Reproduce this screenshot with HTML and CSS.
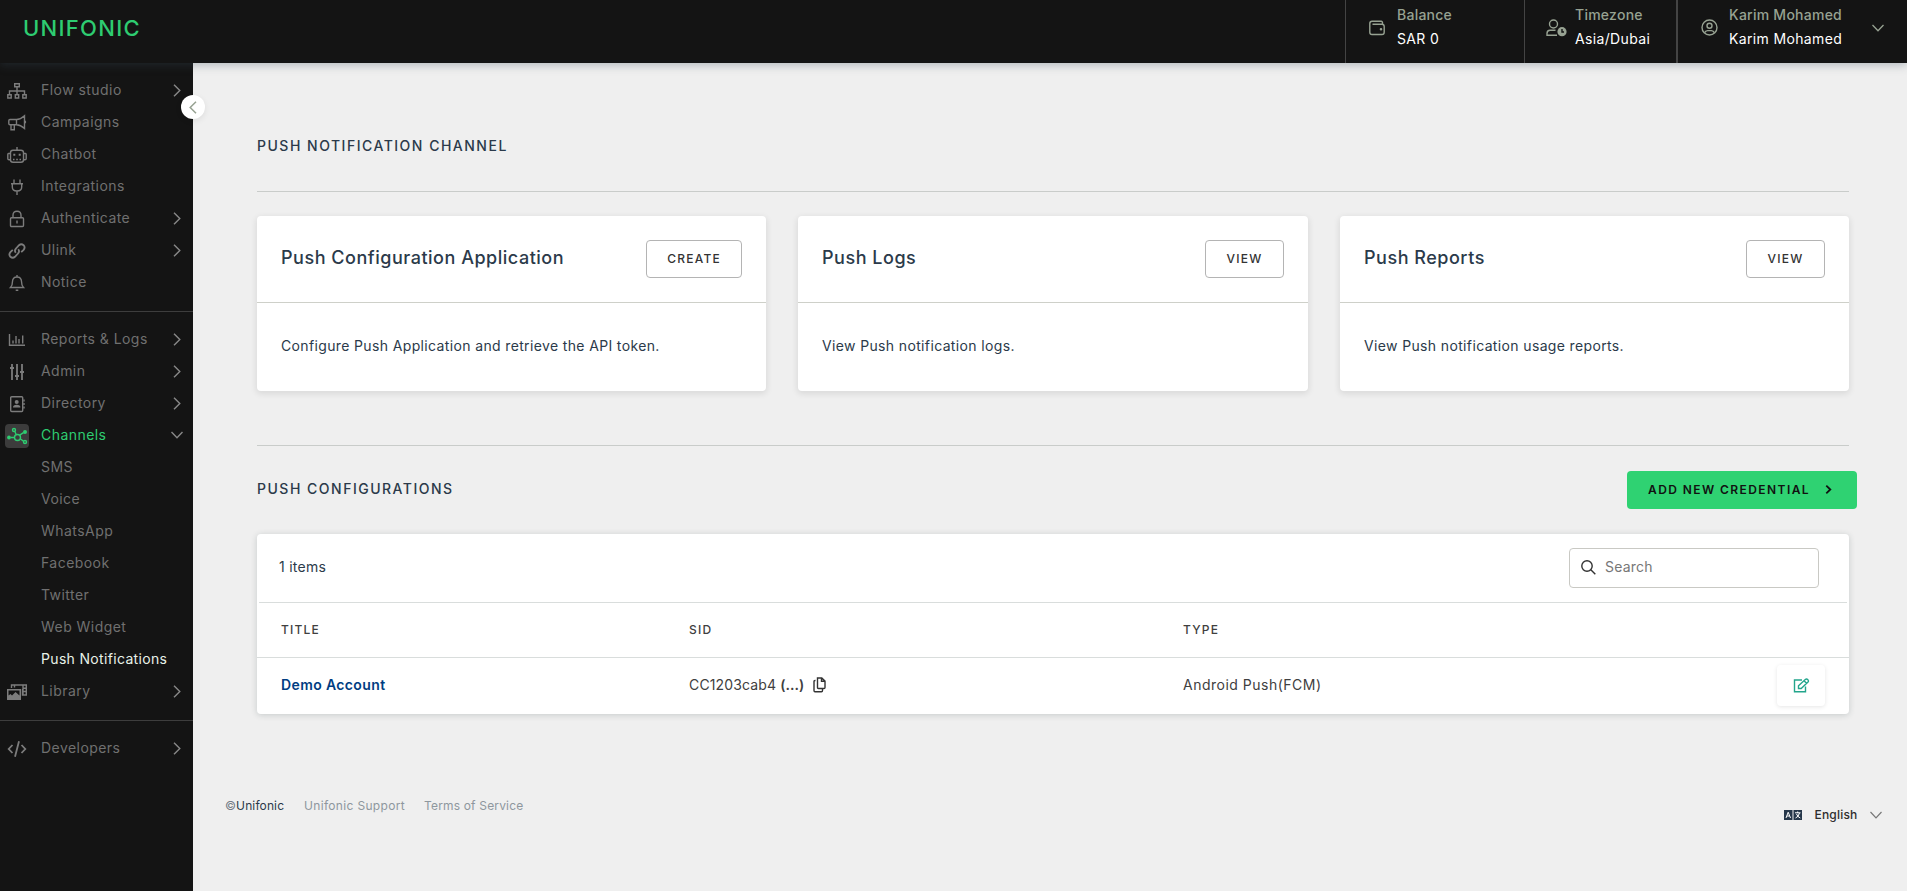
FILE: index.html
```html
<!DOCTYPE html>
<html lang="en">
<head>
<meta charset="utf-8">
<title>Push Notifications</title>
<link rel="stylesheet" href="styles.css">
</head>
<body>
<svg class="defs" width="0" height="0">
  <symbol id="right" viewBox="0 0 8 13"><path d="M1 .7 6.8 6.5 1 12.3"/></symbol>
  <symbol id="down" viewBox="0 0 12 8"><path d="M.5 1 6 6.8 11.5 1"/></symbol>
</svg>
<header class="topbar">
  <div class="logo">UNIFONIC</div>
  <div class="cell balance">
    <svg class="ic" width="16" height="16" viewBox="0 0 16 16"><path d="M13.5 4V2.6Q13.500 1.300 12.200 1.300H3Q.8 1.300.8 3.500V12.200Q.8 14.500 3 14.500H13Q15.200 14.500 15.200 12.200V6.500Q15.200 4.300 13 4.300H3.500"/><circle cx="12" cy="9.300" r=".6"/></svg>
    <div class="pair"><span>Balance</span><b>SAR 0</b></div>
  </div>
  <div class="cell zone">
    <svg class="ic" width="21" height="18" viewBox="0 0 21 18"><circle cx="7.500" cy="5" r="4"/><path d="M11 16.300H1V14.500Q1 11.300 4 11.300H9.500"/><circle class="fl" cx="16" cy="12.700" r="4.600"/><path class="cut" d="M16 10V13H18"/></svg>
    <div class="pair"><span>Timezone</span><b>Asia/Dubai</b></div>
  </div>
  <div class="cell user">
    <svg class="ic" width="17" height="17" viewBox="0 0 17 17"><circle cx="8.500" cy="8.500" r="7.500"/><circle cx="8.500" cy="6.800" r="2.500"/><path d="M3.600 13.800Q4.500 11.600 6.500 11.600H10.500Q12.500 11.600 13.400 13.800"/></svg>
    <div class="pair"><span>Karim Mohamed</span><b>Karim Mohamed</b></div>
    <svg class="ic chev" width="12" height="8"><use href="#down"/></svg>
  </div>
</header>
<div class="body">
<nav class="side">
  <button class="collapse"><svg width="8" height="13" viewBox="0 0 8 13"><path d="M7 .7 1.200 6.500 7 12.300"/></svg></button>
  <a class="item"><svg class="ic" width="20" height="18" viewBox="0 0 20 18"><path d="M7.700 1.700H12.300V4.700H7.700ZM10 5V12.500M2.500 12V9H17.500V12M.8 12.700H4.200V16H.8ZM8.300 12.700H11.700V16H8.300ZM15.800 12.700H19.200V16H15.800Z"/></svg><span>Flow studio</span><svg class="arr" width="8" height="13"><use href="#right"/></svg></a>
  <a class="item"><svg class="ic" width="20" height="18" viewBox="0 0 20 18"><path d="M9.500 5.500H3Q1.800 5.500 1.800 6.700V9.500Q1.800 10.800 3 10.800H9.500M9.500 5.500Q13.500 5.500 17.500 1.800V14.500Q13.500 10.800 9.500 10.800ZM17.500 6.500Q19.500 8 17.500 9.500M4 11V15.700H7.300V11"/></svg><span>Campaigns</span></a>
  <a class="item"><svg class="ic" width="20" height="18" viewBox="0 0 20 18"><rect x="3.500" y="4.300" width="13" height="12" rx="2.500"/><path d="M10 1V4M3 7.500H1.500Q.8 7.500.8 8.500V12.500Q.8 13.800 2 13.800H3M17 7.500H18.500Q19.200 7.500 19.200 8.500V12.500Q19.200 13.800 18 13.800H17M6 13.500H7.500M9.200 13.500H10.800M12.500 13.500H14"/><path class="fl" d="M6.300 7.700H8.300V9.700H6.300ZM11.700 7.700H13.700V9.700H11.700Z"/></svg><span>Chatbot</span></a>
  <a class="item"><svg class="ic" width="20" height="18" viewBox="0 0 20 18"><path d="M7 1.500V5M13 1.500V5M4 5.800H16M5.300 6V9Q5.300 13 10 13Q14.700 13 14.700 9V6M10 13V17"/></svg><span>Integrations</span></a>
  <a class="item"><svg class="ic" width="20" height="18" viewBox="0 0 20 18"><rect x="3.500" y="7.700" width="13" height="8.800" rx="1"/><path d="M6 7.500V5.200Q6 1.200 10 1.200Q14 1.200 14 5.200V7.500M10 10.500V13.500"/></svg><span>Authenticate</span><svg class="arr" width="8" height="13"><use href="#right"/></svg></a>
  <a class="item"><svg class="ic thick" width="20" height="18" viewBox="0 0 20 18"><path d="M8.800 10.800Q7 8.500 9 6.500L12 3.200Q14.300 1.200 16.600 3.200Q18.600 5.400 16.600 7.800L14.200 10.200M11.200 7.300Q13 9.500 11 11.500L8 14.800Q5.700 16.800 3.400 14.800Q1.400 12.600 3.400 10.200L5.800 7.800"/></svg><span>Ulink</span><svg class="arr" width="8" height="13"><use href="#right"/></svg></a>
  <a class="item"><svg class="ic" width="20" height="18" viewBox="0 0 20 18"><path d="M3.500 13.500Q5.500 11.500 5.500 7.500Q5.500 3 10 3Q14.500 3 14.500 7.500Q14.500 11.500 16.500 13.500ZM10 1V3M8.700 16.300H11.300"/></svg><span>Notice</span></a>
  <hr>
  <a class="item"><svg class="ic" width="20" height="18" viewBox="0 0 20 18"><path d="M2.500 3V14.300H18M6 12.500V9.500M9 12.500V5M12 12.500V8M15.700 12.500V4.500"/></svg><span>Reports &amp; Logs</span><svg class="arr" width="8" height="13"><use href="#right"/></svg></a>
  <a class="item"><svg class="ic thick" width="20" height="18" viewBox="0 0 20 18"><path d="M5 1V17M10 1V17M15 1V17M3 5H7M8 13H12M13 9H17"/></svg><span>Admin</span><svg class="arr" width="8" height="13"><use href="#right"/></svg></a>
  <a class="item"><svg class="ic" width="20" height="18" viewBox="0 0 20 18"><rect x="3.700" y="1.700" width="12" height="14.800" rx="1"/><path d="M17 4.500V6.500M17 8V10M17 11.500V13.500"/><circle class="fl" cx="9.700" cy="7" r="2"/><path class="fl" d="M6 12.500Q6 9.800 9.700 9.800T13.400 12.500Z"/></svg><span>Directory</span><svg class="arr" width="8" height="13"><use href="#right"/></svg></a>
  <a class="item on"><svg class="ic chan" width="24" height="24" viewBox="0 0 24 24"><circle cx="12.500" cy="13.500" r="3"/><circle cx="9" cy="6" r="1.500"/><circle cx="20" cy="18" r="1.500"/><path d="M9.700 7.300 11.300 10.700M15.300 14.800 18.500 17.300M6 13.500H9.500M14.700 11.200 18.500 8.700"/><circle class="fl" cx="4" cy="13.500" r="1.900"/><circle class="fl" cx="20" cy="8" r="2"/></svg><span>Channels</span><svg class="arr" width="12" height="8"><use href="#down"/></svg></a>
  <a class="item sub">SMS</a>
  <a class="item sub">Voice</a>
  <a class="item sub">WhatsApp</a>
  <a class="item sub">Facebook</a>
  <a class="item sub">Twitter</a>
  <a class="item sub">Web Widget</a>
  <a class="item sub current">Push Notifications</a>
  <a class="item"><svg class="ic" width="20" height="18" viewBox="0 0 20 18"><path d="M4.500 5V2H19.300V12H15.500V6M16 2V12M16.500 5.200H19M16.500 8.500H19M7.500 2V4.500"/><path class="fl" fill-rule="evenodd" d="M0 6H14V17H0ZM1.500 7.500V12.500L3.500 11 5 12.500 8.500 9 12.500 12.500V7.500Z"/></svg><span>Library</span><svg class="arr" width="8" height="13"><use href="#right"/></svg></a>
  <hr>
  <a class="item"><svg class="ic thick" width="20" height="18" viewBox="0 0 20 18"><path d="M5.500 5 1.700 9 5.500 13M14.500 5 18.300 9 14.500 13M12 1.200 8 16.800"/></svg><span>Developers</span><svg class="arr" width="8" height="13"><use href="#right"/></svg></a>
</nav>
<main class="main">
  <h1 class="caps first">PUSH NOTIFICATION CHANNEL</h1>
  <section class="cards">
    <article class="card"><div class="head"><h2>Push Configuration Application</h2><button class="btn">CREATE</button></div><p>Configure Push Application and retrieve the API token.</p></article>
    <article class="card"><div class="head"><h2>Push Logs</h2><button class="btn view">VIEW</button></div><p>View Push notification logs.</p></article>
    <article class="card"><div class="head"><h2>Push Reports</h2><button class="btn view">VIEW</button></div><p>View Push notification usage reports.</p></article>
  </section>
  <div class="confhead">
    <h1 class="caps">PUSH CONFIGURATIONS</h1>
    <button class="add"><span>ADD NEW CREDENTIAL</span><svg width="7" height="9" viewBox="0 0 7 9"><path d="M1.300.7 5.300 4.500 1.300 8.300"/></svg></button>
  </div>
  <section class="table">
    <div class="tools">
      <span class="count">1 items</span>
      <div class="search"><svg width="15" height="15" viewBox="0 0 15 15"><circle cx="6" cy="6" r="5.200"/><path d="M9.800 9.800 14.300 14.300"/></svg><span>Search</span></div>
    </div>
    <div class="row th"><span>TITLE</span><span>SID</span><span>TYPE</span><span></span></div>
    <div class="row td">
      <a class="name">Demo Account</a>
      <span class="sid"><span class="code">CC1203cab4</span><b>(...)</b><svg width="13" height="16" viewBox="0 0 13 16"><path d="M4.500 1H8.800L12 4V10.500Q12 11.500 11 11.500H5.500Q4.500 11.500 4.500 10.500ZM8.500 1V4.300H12M2.500 3.500H2Q1 3.500 1 4.500V13.500Q1 14.700 2 14.700H8.500Q9.500 14.700 9.500 13.500V12"/></svg></span>
      <span class="type">Android Push(FCM)</span>
      <button class="edit"><svg width="17" height="15" viewBox="0 0 17 15"><path d="M9 2H1.500V13.700H12.500V8.500"/><path d="M5.500 10.500V7.800L12.300 1.500Q13.500.5 14.800 1.600 16 2.900 15 4L8.200 10.500ZM11 2.800 13.600 5.300"/></svg></button>
    </div>
  </section>
  <footer class="foot">
    <span class="copy"><i>©</i>Unifonic</span><a class="f1">Unifonic Support</a><a class="f2">Terms of Service</a>
    <div class="lang"><svg width="18" height="10" viewBox="0 0 18 10"><path class="bg" d="M0 0H8.500V10H0ZM9.500 0H18V10H9.500Z"/><path class="fg" d="M2 8 4.200 2.200 6.500 8M3 6H5.500M11 2.800H16.500M13.700 1.500V3M15.500 3Q14.500 7 11.500 8M12.500 4Q13.700 7 16.300 8"/></svg><span>English</span><svg class="dn" width="12" height="8"><use href="#down"/></svg></div>
  </footer>
</main>
</div>
</body>
</html>
```
FILE: styles.css
```css
* { box-sizing: border-box; }
body {
  margin: 0;
  height: 891px;
  overflow: hidden;
  display: flex;
  flex-direction: column;
  background: #efefef;
  color: #2b3a4a;
  font: 400 14px/20px Inter, "Open Sans", sans-serif;
}
.defs { position: absolute; }
svg { flex: none; fill: none; stroke: currentColor; }
h1, h2, p { margin: 0; }
button { font: inherit; padding: 0; border: 0; background: none; }

.topbar {
  position: relative;
  z-index: 2;
  flex: none;
  height: 63px;
  display: flex;
  background: #141414;
  color: #97a292;
  box-shadow: 0 2px 9px rgba(60, 75, 90, .34);
}
.logo {
  flex: 1;
  padding: 13px 0 0 23px;
  font-size: 22px;
  line-height: 30px;
  font-weight: 500;
  letter-spacing: 1.3px;
  color: #2ecc71;
}
.cell { display: flex; border-left: 1px solid #444; }
.ic { stroke-width: 1.4; }
.thick { stroke-width: 1.8; }
.fl { fill: currentColor; stroke: none; }
.cut { stroke: #141414; }
.pair { display: flex; flex-direction: column; padding-top: 3px; }
.pair span, .pair b { line-height: 24px; white-space: nowrap; }
.pair span { font-weight: 500; letter-spacing: .25px; }
.pair b { font-weight: 400; letter-spacing: .35px; color: #fff; }
.balance { width: 179px; padding-left: 23px; gap: 12px; }
.balance .ic { margin-top: 20px; }
.zone { width: 152px; padding-left: 21px; gap: 8px; }
.zone .ic { margin-top: 19px; }
.user { width: 231px; border-left-width: 2px; padding-left: 23px; gap: 11px; }
.user .ic { margin-top: 19px; }
.user .chev { margin: 24px 23px 0 auto; stroke-width: 1.3; }

.body { flex: 1; display: flex; min-height: 0; }
.side {
  position: relative;
  width: 193px;
  flex: none;
  padding-top: 11px;
  background: #141414;
  color: #707070;
}
.item {
  display: flex;
  align-items: center;
  height: 32px;
  padding: 0 12px 0 7px;
  letter-spacing: .45px;
}
.item span { flex: 1; padding-left: 14px; }
.item .arr { stroke-width: 1.4; color: #888; }
.item .ic { margin-top: 1px; }
.item:not(.on) .ic { color: #7c7c7c; }
.side hr { height: 1px; margin: 13px 0 11px; border: 0; background: #3d3d3d; }
.item.on { padding: 0 10px 0 5px; color: #2ecc71; }
.item.on span { padding-left: 12px; }
.item .chan { border-radius: 4px; background: #3c3c3c; }
.item.sub { padding-left: 41px; }
.item.current { color: #e8f2e8; letter-spacing: .33px; }
.collapse {
  position: absolute;
  top: 32px;
  left: 181px;
  width: 24px;
  height: 24px;
  border-radius: 50%;
  display: grid;
  place-items: center;
  background: #fff;
  color: #97a292;
  box-shadow: 0 2px 6px rgba(0, 0, 0, .08);
}
.collapse svg { stroke-width: 1.5; }

.main { flex: 1; padding: 73px 58px 0 64px; }
.caps { font-size: 14px; line-height: 20px; font-weight: 500; letter-spacing: 1.5px; }
.first { height: 55px; }
.cards {
  display: grid;
  grid-template-columns: 509px 510px 509px;
  gap: 32px;
  height: 255px;
  padding-top: 24px;
  border-top: 1px solid #c9ccca;
  border-bottom: 1px solid #c9ccca;
}
.card { height: 175px; border-radius: 4px; background: #fff; box-shadow: 0 2px 6px 1px rgba(0, 0, 0, .09); }
.head {
  display: flex;
  align-items: center;
  justify-content: space-between;
  height: 87px;
  padding: 0 24px;
  border-bottom: 1px solid #ced0c9;
}
.head h2 { font-size: 18px; line-height: 24px; font-weight: 500; letter-spacing: .52px; padding-bottom: 3px; }
.card p { padding: 33px 24px 0; line-height: 20px; letter-spacing: .36px; }
.btn {
  height: 38px;
  padding: 0 20px;
  border: 1px solid #b4b4b4;
  border-radius: 4px;
  font-size: 12px;
  font-weight: 500;
  letter-spacing: 1.25px;
  color: #333;
}
.btn.view { width: 79px; }
.confhead { display: flex; align-items: flex-start; justify-content: space-between; padding-top: 25px; margin-right: -8px; }
.confhead .caps { padding-top: 8px; }
.add {
  width: 230px;
  height: 38px;
  padding: 0 25px 1px 21px;
  display: flex;
  align-items: center;
  justify-content: space-between;
  border-radius: 4px;
  background: #2fd272;
  color: #111;
  font-size: 12px;
  font-weight: 600;
  letter-spacing: 1.42px;
}
.add svg { stroke-width: 1.8; }
.table { height: 180px; margin-top: 25px; border-radius: 4px; background: #fff; color: #404040; box-shadow: 0 1px 6px rgba(40, 60, 60, .2); }
.tools {
  height: 69px;
  margin: 0 2px;
  padding: 0 28px 1px 20px;
  display: flex;
  align-items: center;
  justify-content: space-between;
  border-bottom: 1px solid #d9dddc;
  color: #2b3a4a;
}
.count { padding-bottom: 2px; letter-spacing: .25px; }
.search {
  width: 250px;
  height: 40px;
  display: flex;
  align-items: center;
  gap: 9px;
  padding-left: 11px;
  border: 1px solid #c9c9c4;
  border-radius: 4px;
  color: #777;
}
.search span { padding-bottom: 2px; letter-spacing: .2px; }
.search svg { color: #333; stroke-width: 1.4; }
.row { display: grid; grid-template-columns: 408px 494px 1fr 48px; align-items: center; padding: 0 24px; }
.th { height: 55px; border-bottom: 1px solid #d9dddc; font-size: 12px; font-weight: 500; letter-spacing: 1.2px; }
.td { height: 54px; }
.name { font-weight: 600; letter-spacing: .38px; color: #003d82; }
.code { letter-spacing: .15px; }
.type { letter-spacing: .5px; }
.sid { display: flex; align-items: center; }
.sid b { padding: 0 9px 0 4px; font-weight: 600; }
.sid svg { stroke-width: 1.4; color: #333; }
.edit {
  width: 48px;
  height: 41px;
  display: grid;
  place-items: center;
  border-radius: 4px;
  color: #23a58c;
  box-shadow: 0 1px 4px rgba(0, 0, 0, .1);
}
.edit svg { stroke-width: 1.4; }
.foot { display: flex; padding-top: 82px; margin: 0 -33px 0 -32px; font-size: 12px; line-height: 20px; color: #8e979e; }
.copy { color: #2b3a4a; width: 79px; letter-spacing: .12px; }
.copy i { font-style: normal; color: #737d86; }
.f1 { width: 120px; letter-spacing: .33px; }
.f2 { letter-spacing: .17px; }
.lang { display: flex; align-items: center; gap: 12.5px; margin: 9px 0 0 auto; font-weight: 500; letter-spacing: .2px; color: #2e2e2e; }
.lang .bg { fill: #26374a; stroke: none; }
.lang .fg { stroke: #fff; stroke-width: 1; }
.lang .dn { color: #777; stroke-width: 1.2; }
```
